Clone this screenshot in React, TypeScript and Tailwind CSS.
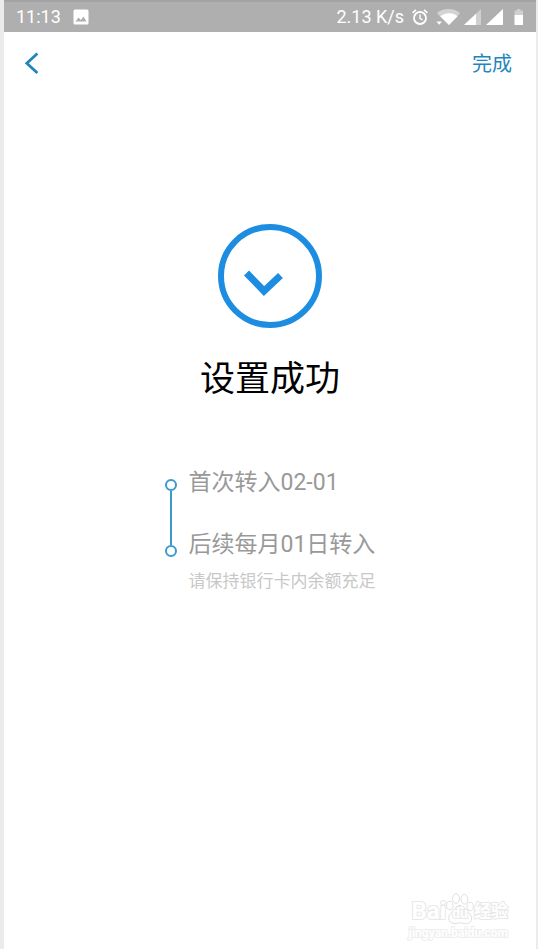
import type { ReactNode } from 'react'

function StatusBar() {
  return (
    <div className="flex h-8 items-center border-t-2 border-[#a3a3a3] bg-[#afafaf] px-3 text-lg text-white">
      <span>11:13</span>
      <svg className="ml-3 size-4" viewBox="0 0 16 16" aria-hidden="true">
        <rect x="0.5" y="0.5" width="15" height="15" rx="1.5" fill="#fff" />
        <path d="M2.5 12.5L5.5 8.5L7.8 11L10.5 7.5L13.5 12.5Z" fill="#afafaf" />
      </svg>

      <span className="ml-auto">2.13 K/s</span>
      <svg className="ml-2 size-4" viewBox="0 0 16 16" fill="none" stroke="#fff" aria-hidden="true">
        <circle cx="8" cy="9" r="6" strokeWidth="1.8" />
        <path d="M8 5.5V9.3L10.6 11" strokeWidth="1.4" />
        <path d="M0.6 3.8L4 0.9M15.4 3.8L12 0.9" strokeWidth="1.6" />
      </svg>
      <svg className="ml-2 h-4 w-6" viewBox="0 0 24 16" aria-hidden="true">
        <path d="M1 4.2C7 -1.4 18 -1.4 24 4.2L13 16Z" fill="#d3d3d3" />
        <path d="M4.2 7.2C9.5 3.2 17 3.2 21.6 7.2L13 16Z" fill="#fff" />
        <path d="M0.5 12.6H6L3.2 15.8Z" fill="#fff" />
      </svg>
      <svg className="ml-1 h-4 w-4.5" viewBox="0 0 18 16" aria-hidden="true">
        <path d="M0 16L17 0V16Z" fill="#d0d0d0" />
        <path d="M0 16L12 4.7V16Z" fill="#fff" />
      </svg>
      <svg className="ml-1 h-4 w-4.5" viewBox="0 0 18 16" aria-hidden="true">
        <path d="M0 16L17 0V16Z" fill="#fff" />
      </svg>
      <svg className="ml-2.5 h-4 w-2.5" viewBox="0 0 10 16" aria-hidden="true">
        <path d="M0.5 1.5H3V0H6.5V1.5H9V6H0.5Z" fill="#d0d0d0" />
        <path d="M0.5 6H9V16H0.5Z" fill="#fff" />
      </svg>
    </div>
  )
}

function Header() {
  return (
    <header className="flex h-16 items-center justify-between pr-6 pl-5">
      <button type="button" aria-label="返回">
        <svg className="h-6 w-4" viewBox="0 0 16 24" fill="none" aria-hidden="true">
          <path d="M13.4 1.5L2.8 11.3L13.4 21" stroke="#1e86bd" strokeWidth="2.8" />
        </svg>
      </button>
      <button type="button" className="text-xl text-[#1e86bd]">
        完成
      </button>
    </header>
  )
}

function SuccessMark() {
  return (
    <svg className="size-26" viewBox="0 0 104 104" fill="none" aria-hidden="true">
      <circle cx="52" cy="52" r="49" stroke="#1c8de0" strokeWidth="6" />
      <path d="M28.5 49L46 67L62.5 51.5" stroke="#1c8de0" strokeWidth="7" />
    </svg>
  )
}

function Step({ last = false, children }: { last?: boolean; children: ReactNode }) {
  return (
    <li className="flex gap-3">
      <div className={last ? 'flex w-3 flex-col items-center pt-4' : 'flex w-3 flex-col items-center pt-3'} aria-hidden="true">
        <span className="size-3 shrink-0 rounded-full border-2 border-[#3d9bcb]" />
        {!last && <span className="-mb-4 w-0.5 grow bg-[#3d9bcb]" />}
      </div>
      <div className={last ? '' : 'pb-[30px]'}>{children}</div>
    </li>
  )
}

function Watermark() {
  return (
    <footer className="mt-auto flex flex-col items-end self-end pr-7 pb-2 font-bold text-white [-webkit-text-stroke:2px_#e8e8e8] [paint-order:stroke_fill]">
      <div className="flex h-8 items-end">
        <span className="text-2xl leading-7">Bai</span>
        <div className="relative h-8 w-7">
          <svg className="h-8 w-7 [paint-order:normal]" viewBox="0 0 28 32" fill="#fff" stroke="#dfdfdf" aria-hidden="true">
            <ellipse cx="3.8" cy="12.5" rx="3.2" ry="4.2" />
            <ellipse cx="10" cy="5.6" rx="3.4" ry="4.8" />
            <ellipse cx="18.4" cy="6.2" rx="3.4" ry="4.8" />
            <ellipse cx="24.2" cy="13.5" rx="3.2" ry="4.2" />
            <path d="M14 12.5C9.5 12.5 9 17 5.5 19.5C1.5 22.5 1.5 30 8 30.5C11 30.8 12 29.8 14 29.8S17.5 30.8 20.5 30.5C27 30 27 22.5 22.5 19.5C19 17 18.5 12.5 14 12.5Z" />
          </svg>
          <span className="absolute inset-x-0 bottom-0.5 text-center text-sm">du</span>
        </div>
        <span className="text-[17px] leading-7">经验</span>
      </div>
      <span className="text-xs leading-4 [-webkit-text-stroke:2px_#eeeeee]">jingyan.baidu.com</span>
    </footer>
  )
}

export default function App() {
  return (
    <div className="flex min-h-screen flex-col border-r-2 border-l-4 border-[#ebebeb] bg-white font-[Roboto,'Noto_Sans_CJK_SC',sans-serif]">
      <StatusBar />
      <Header />
      <main className="flex flex-col items-center pt-32">
        <SuccessMark />
        <h1 className="mt-7 text-[35px] leading-12 text-black">设置成功</h1>
        <ol className="mt-[63px] text-[23px] leading-8 text-[#999999]">
          <Step>首次转入02-01</Step>
          <Step last>
            <p>后续每月01日转入</p>
            <p className="mt-2 text-[17px] leading-6 text-[#c8c8c8]">请保持银行卡内余额充足</p>
          </Step>
        </ol>
      </main>
      <Watermark />
    </div>
  )
}
